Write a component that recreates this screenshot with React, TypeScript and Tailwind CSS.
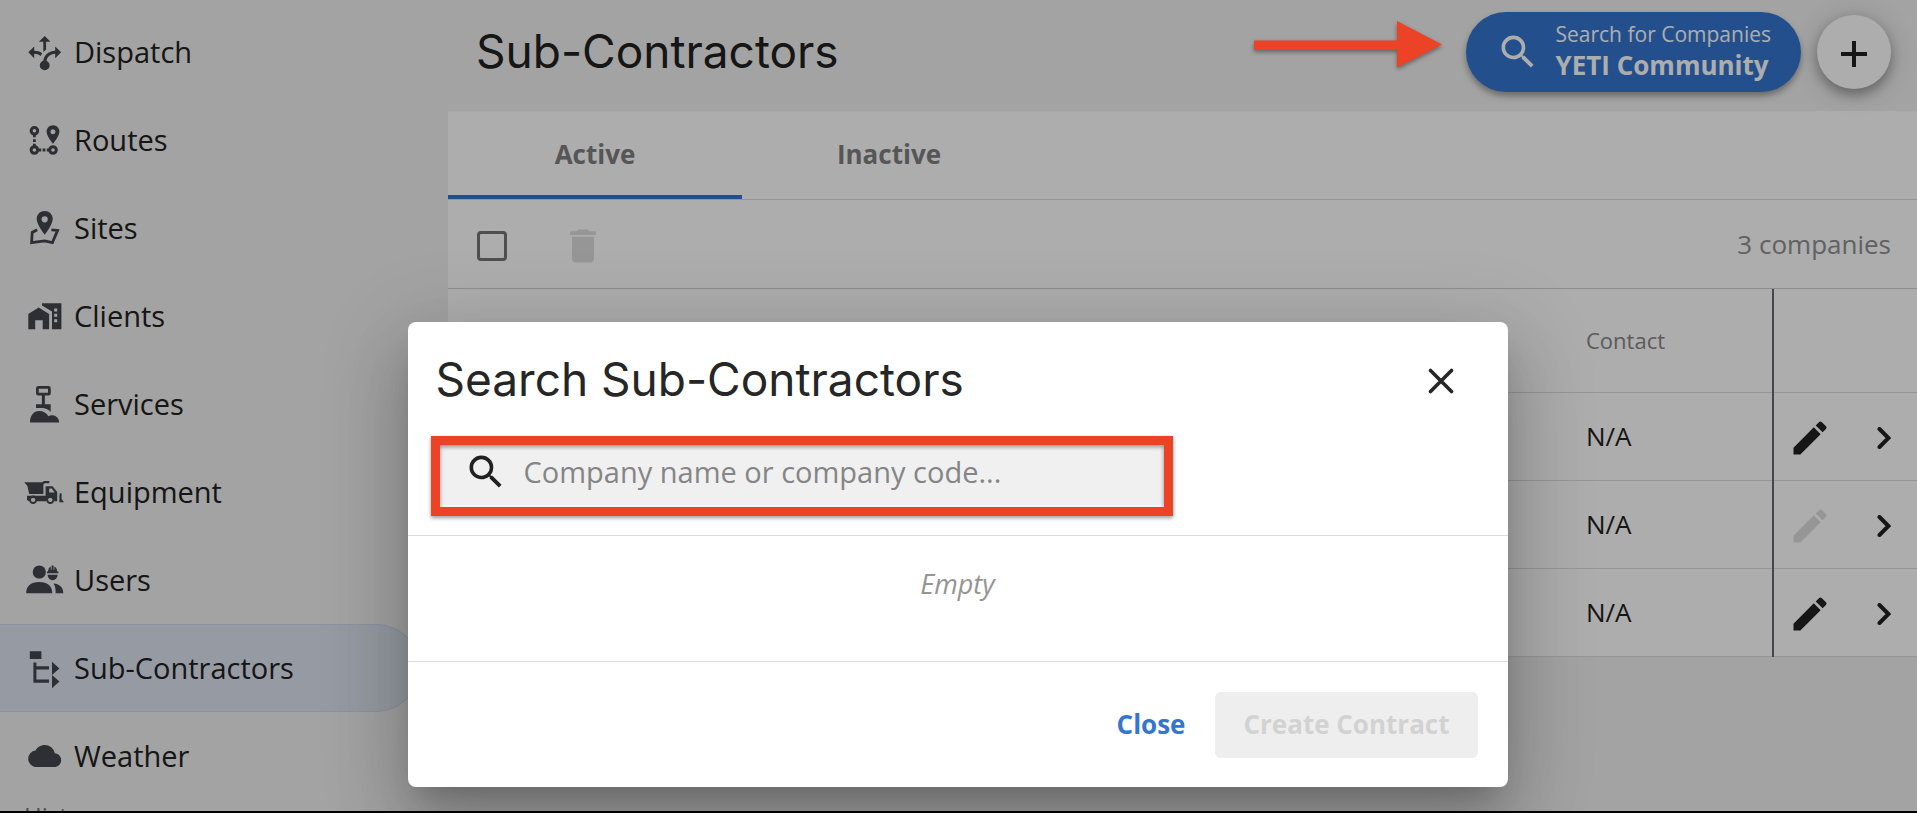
import React, { useState } from 'react';
import { MdDelete, MdEdit, MdSearch } from 'react-icons/md';

interface NavItem {
  label: string;
  icon: React.ReactNode;
}

interface CompanyRow {
  id: number;
  contact: string;
  editable: boolean;
}

// Sidebar icons share one 40x40 grid
const NavIcon: React.FC<{ children: React.ReactNode }> = ({ children }) => (
  <svg viewBox="0 0 40 40" className="h-10 w-10 flex-none overflow-visible text-[#45454f]" fill="currentColor" aria-hidden="true">
    {children}
  </svg>
);

const navItems: NavItem[] = [
  {
    label: 'Dispatch',
    icon: (
      <NavIcon>
        <path d="M20.7 4 26.5 9.8H22.1V17.6L19.3 20V9.8H14.9z" />
        <path d="M4.3 20.3 10.2 14.5V18.8C13.4 18.8 15.8 19.6 18.2 21.2L16.6 23.9C14.8 22.5 12.6 21.8 10.2 21.8V26.2z" />
        <path d="M37.1 20.3 31.2 14.5V18.8C24 19.2 19.8 23.4 19.2 29.5H22.3C22.9 25.2 26 22 31.2 21.8V26.2z" />
        <circle cx="20.7" cy="33.4" r="4.9" />
      </NavIcon>
    ),
  },
  {
    label: 'Routes',
    icon: (
      <NavIcon>
        <g fill="none" stroke="currentColor" strokeWidth="3">
          <circle cx="10.4" cy="10.8" r="3.3" />
          <circle cx="10.4" cy="30" r="3.3" />
          <circle cx="29" cy="30" r="3.3" />
        </g>
        <path d="M9 15h2.8v2.2H9zM9 19.2h2.8V22H9zM9 23.8h2.8V26H9zM15 28.6h2.2v2.8H15zM18.6 28.6h2.8v2.8h-2.8zM22.8 28.6H25v2.8h-2.2z" />
        <path fillRule="evenodd" d="M29 5.3c-3.6 0-6.4 2.8-6.4 6.4 0 4.4 6.4 12 6.4 12s6.4-7.6 6.4-12c0-3.6-2.8-6.4-6.4-6.4zm0 8.9a2.5 2.5 0 1 1 0-5 2.5 2.5 0 0 1 0 5z" />
      </NavIcon>
    ),
  },
  {
    label: 'Sites',
    icon: (
      <NavIcon>
        <path fillRule="evenodd" d="M20.7 3c-4.5 0-8 3.5-8 8 0 5.5 8 15.8 8 15.8s8-10.3 8-15.8c0-4.5-3.5-8-8-8zm0 11.4a3.1 3.1 0 1 1 0-6.2 3.1 3.1 0 0 1 0 6.2z" />
        <path fill="none" stroke="currentColor" strokeWidth="2.8" d="M13.2 21.8 8.2 24.4 7.6 34.6 20.7 32.8 28.4 34.6 33.6 22.4 27.4 21.9" />
      </NavIcon>
    ),
  },
  {
    label: 'Clients',
    icon: (
      <NavIcon>
        <path d="M4.3 18 14.7 11.4 25.1 18V33.2H18.7V24.2H11.2V33.2H4.3z" />
        <path fillRule="evenodd" d="M18 7.2H37.4V33.2H28V15.6L18 9.6zM30.2 12.4v3h3v-3zM30.2 17.8v3h3v-3zM30.2 23.2v3h3v-3z" />
      </NavIcon>
    ),
  },
  {
    label: 'Services',
    icon: (
      <NavIcon>
        <rect x="13.4" y="3.4" width="12" height="6.8" rx="1" fill="none" stroke="currentColor" strokeWidth="2.8" />
        <path d="M17.9 11h3v9.3h5.8v7.6c-1.6-1.8-4.2-3.6-7.8-3.9H12v-3.7h5.9z" />
        <path d="M6 38.4C6 31.6 9.6 27 15.2 27c4 0 7.4 2 9.2 5.2 1.2-.8 2.8-1.2 4.4-1 3.6.4 6.2 3.2 6.4 7.2z" />
      </NavIcon>
    ),
  },
  {
    label: 'Equipment',
    icon: (
      <NavIcon>
        <path d="M.3 10.3H18.2L20 9H25.3V11.3H20.6L19.4 12.4V22H5.2L3.4 14z" />
        <path fillRule="evenodd" d="M3 23.8H21.6V14.2H28.6L33.2 20V29.2H30.4A4.2 4.2 0 0 0 22.2 29.2H13.2A4.2 4.2 0 0 0 5 29.2L3 28zM25.2 16.4V20.4H30.6L27.8 16.4z" />
        <g fill="none" stroke="currentColor" strokeWidth="2">
          <circle cx="9.1" cy="27.8" r="3.2" />
          <circle cx="26.3" cy="27.8" r="3.2" />
        </g>
        <path d="M35.8 21.2H37.6V27L40 30.2H35.4V24z" />
      </NavIcon>
    ),
  },
  {
    label: 'Users',
    icon: (
      <NavIcon>
        <circle cx="15.3" cy="12" r="6.6" />
        <path d="M2.2 33.2C2 26.4 6.6 22 15.2 22s13.2 4.4 13 11.2z" />
        <path d="M29.4 23.4c5.8.4 10 3.6 9.9 9.8H31.6C31.8 29.4 31.4 26 29.4 23.4z" />
        <path d="M24 11.4C24.2 8.6 25.2 7.2 26.8 6.4V9.8H27.6V5.4H29.6V9.8H30.4V6.4C32 7.2 33 8.6 33.2 11.4H34.4V13.2H23V11.4z" />
        <path d="M23.6 14.8H33.6C33.4 18 31.4 20.2 28.6 20.2S23.8 18 23.6 14.8z" />
      </NavIcon>
    ),
  },
  {
    label: 'Sub-Contractors',
    icon: (
      <NavIcon>
        <path d="M5.8 3.2H17.4V11H5.8zM9.4 14.6H12.4V18.2H25V21.4H12.4V31.4H25V34.8H9.4zM28 13.8 35.4 20.4 28 27zM28 27 35.4 33.6 28 40.2z" />
      </NavIcon>
    ),
  },
  {
    label: 'Weather',
    icon: (
      <NavIcon>
        <path
          transform="translate(4.2 3.5) scale(1.375)"
          d="M19.35 10.04A7.49 7.49 0 0 0 12 4C9.11 4 6.6 5.64 5.35 8.04A5.994 5.994 0 0 0 0 14c0 3.31 2.69 6 6 6h13c2.76 0 5-2.24 5-5 0-2.64-2.05-4.78-4.65-4.96z"
        />
      </NavIcon>
    ),
  },
];

const rows: CompanyRow[] = [
  { id: 1, contact: 'N/A', editable: true },
  { id: 2, contact: 'N/A', editable: false },
  { id: 3, contact: 'N/A', editable: true },
];

const tabs = ['Active', 'Inactive'];

const Sidebar: React.FC = () => (
  <aside className="w-[448px] flex-none pt-2">
    <nav>
      {navItems.map((item) => {
        const active = item.label === 'Sub-Contractors';
        return (
          <a
            key={item.label}
            href="#"
            aria-current={active ? 'page' : undefined}
            className={`mr-7 flex h-22 items-center gap-[10px] rounded-r-full pl-6 text-[29px] text-[#212121] ${
              active ? 'border-y border-r border-[#cbd8ee] bg-[#dee5f0]' : ''
            }`}
          >
            {item.icon}
            {item.label}
          </a>
        );
      })}
    </nav>
    <h2 className="pl-6 text-2xl text-[#757575]">History</h2>
  </aside>
);

const Companies: React.FC = () => {
  const [tab, setTab] = useState('Active');

  return (
    <main className="min-w-0 flex-1">
      <header className="flex h-[111px] items-center gap-4 pr-[26px] pb-2 pl-7">
        <h1 className="flex-1 font-['Inter','Open_Sans',sans-serif] text-[46px] text-[#212121]">Sub-Contractors</h1>
        <button className="flex h-20 items-center gap-4 rounded-full bg-[#3476cf] px-[30px] text-left text-white shadow-[0_4px_6px_rgba(0,0,0,0.35)]">
          <MdSearch className="h-11 w-11" />
          <span className="flex flex-col pb-[3px]">
            <span className="text-[21px] leading-[31px]">Search for Companies</span>
            <span className="text-[26px] leading-[31px] font-bold">YETI Community</span>
          </span>
        </button>
        <button
          aria-label="Add company"
          className="flex h-[74px] w-[74px] items-center justify-center rounded-full bg-white shadow-[0_6px_12px_rgba(0,0,0,0.3),0_2px_28px_rgba(0,0,0,0.16)]"
        >
          <svg viewBox="0 0 26 26" className="mt-1 h-[26px] w-[26px]" stroke="#212121" strokeWidth="4" aria-hidden="true">
            <path d="M13 0v26M0 13h26" />
          </svg>
        </button>
      </header>

      <section className="bg-white">
        <div role="tablist" className="flex h-[89px] border-b border-[#dcdcdc]">
          {tabs.map((t) => (
            <button
              key={t}
              role="tab"
              aria-selected={t === tab}
              onClick={() => setTab(t)}
              className={`w-[294px] border-b-4 pt-0.5 text-[26px] font-bold text-[#7f7f7f] ${
                t === tab ? 'border-[#3476cf]' : 'border-transparent'
              }`}
            >
              {t}
            </button>
          ))}
        </div>

        <div className="flex h-[89px] items-center border-b border-[#cfcfd6] pt-1 pr-[26px] pl-[29px]">
          <input
            type="checkbox"
            aria-label="Select all"
            className="h-[30px] w-[30px] appearance-none rounded-sm border-[3px] border-[#757575]"
          />
          <button disabled aria-label="Delete" className="ml-[54px] text-[#dedede]">
            <MdDelete className="h-11 w-11" />
          </button>
          <span className="ml-auto pb-1 text-[26px] text-[#8f8f8f]">3 companies</span>
        </div>

        <table className="w-full table-fixed text-left text-[#212121]">
          <colgroup>
            <col />
            <col className="w-[205px]" />
            <col className="w-[144px]" />
          </colgroup>
          <thead>
            <tr className="h-[103px] border-b border-[#dedede] text-[22px] text-[#868686]">
              <td />
              <th className="pl-[18px] font-normal">Contact</th>
              <td className="border-l-2 border-[#686872]" />
            </tr>
          </thead>
          <tbody>
            {rows.map((row) => (
              <tr key={row.id} className="h-22 border-b border-[#dedede]">
                <td />
                <td className="pl-[18px] text-[26px]">{row.contact}</td>
                <td className="border-l-2 border-[#686872]">
                  <div className="flex items-center gap-[30px] pt-1 pl-[14px]">
                    <button aria-label="Edit" disabled={!row.editable} className="disabled:text-[#dedede]">
                      <MdEdit className="h-11 w-11" />
                    </button>
                    <button aria-label="Open" className="flex h-11 w-11 items-center justify-center">
                      <svg viewBox="0 0 14 22" className="h-[22px] w-[14px]" fill="none" stroke="currentColor" strokeWidth="4" strokeLinecap="round" aria-hidden="true">
                        <path d="M2.500 2l9 9-9 9" />
                      </svg>
                    </button>
                  </div>
                </td>
              </tr>
            ))}
          </tbody>
        </table>
      </section>
    </main>
  );
};

const SearchDialog: React.FC = () => {
  const [query, setQuery] = useState('');

  return (
    <div
      role="dialog"
      aria-modal="true"
      aria-labelledby="dialog-title"
      className="w-[1100px] rounded-lg bg-white shadow-[0_20px_28px_-12px_rgba(0,0,0,0.2),0_44px_70px_6px_rgba(0,0,0,0.14),0_16px_84px_14px_rgba(0,0,0,0.12)]"
    >
      <div className="flex h-[114px] items-center justify-between pr-[43px] pl-7">
        <h2 id="dialog-title" className="font-['Inter','Open_Sans',sans-serif] text-[46px] text-[#262626]">
          Search Sub-Contractors
        </h2>
        <button aria-label="Close dialog" className="flex h-12 w-12 items-center justify-center pt-1">
          <svg viewBox="0 0 26 26" className="h-[26px] w-[26px]" fill="none" stroke="#262626" strokeWidth="3.6" strokeLinecap="round" aria-hidden="true">
            <path d="M2.500 2.500l21 21M23.500 2.500l-21 21" />
          </svg>
        </button>
      </div>

      <div className="border-b border-[#dcdce4] pr-[335px] pb-[19px] pl-[23px]">
        {/* Highlighted search field */}
        <label className="flex h-20 items-center border-[9px] border-[#ec4226] bg-[#f0f0f0] pb-2 pl-6 shadow-[0_2px_4px_rgba(0,0,0,0.4),inset_0_2px_4px_rgba(0,0,0,0.4),inset_0_-2px_0_#ffffff]">
          <MdSearch className="h-11 w-11 flex-none text-[#212121]" />
          <input
            type="text"
            aria-label="Search companies"
            value={query}
            onChange={(e) => setQuery(e.target.value)}
            placeholder="Company name or company code..."
            className="ml-4 w-full bg-transparent text-[29px] outline-none placeholder:text-[#858585]"
          />
        </label>
      </div>

      <p className="h-[125px] pt-7 text-center text-[27px] text-[#949494] italic">Empty</p>

      <div className="flex h-[126px] items-center justify-end gap-[30px] border-t border-[#dcdce4] pr-[30px] text-[26px] font-bold">
        <button className="text-[#3476cf]">Close</button>
        <button disabled className="h-[66px] rounded-md bg-[#eeeeee] px-7 text-[#d2d2d2]">
          Create Contract
        </button>
      </div>
    </div>
  );
};

export default function App() {
  return (
    <div className="relative flex h-screen overflow-hidden border-b-2 border-black bg-[#f0f0f0] font-['Open_Sans','Noto_Sans',sans-serif]">
      <Sidebar />
      <Companies />

      <div className="absolute inset-0 flex items-end justify-center bg-black/32 pr-0.5 pb-6">
        <SearchDialog />
      </div>

      {/* Callout arrow next to the community search button */}
      <svg viewBox="0 0 188 48" className="absolute top-5 right-[475px] h-12 w-[188px] drop-shadow-[0_2px_2px_rgba(0,0,0,0.4)]" fill="#ec4226" aria-hidden="true">
        <path d="M0 20.5H143V1L188 24.5 143 47.5V30H0z" />
      </svg>
    </div>
  );
}
